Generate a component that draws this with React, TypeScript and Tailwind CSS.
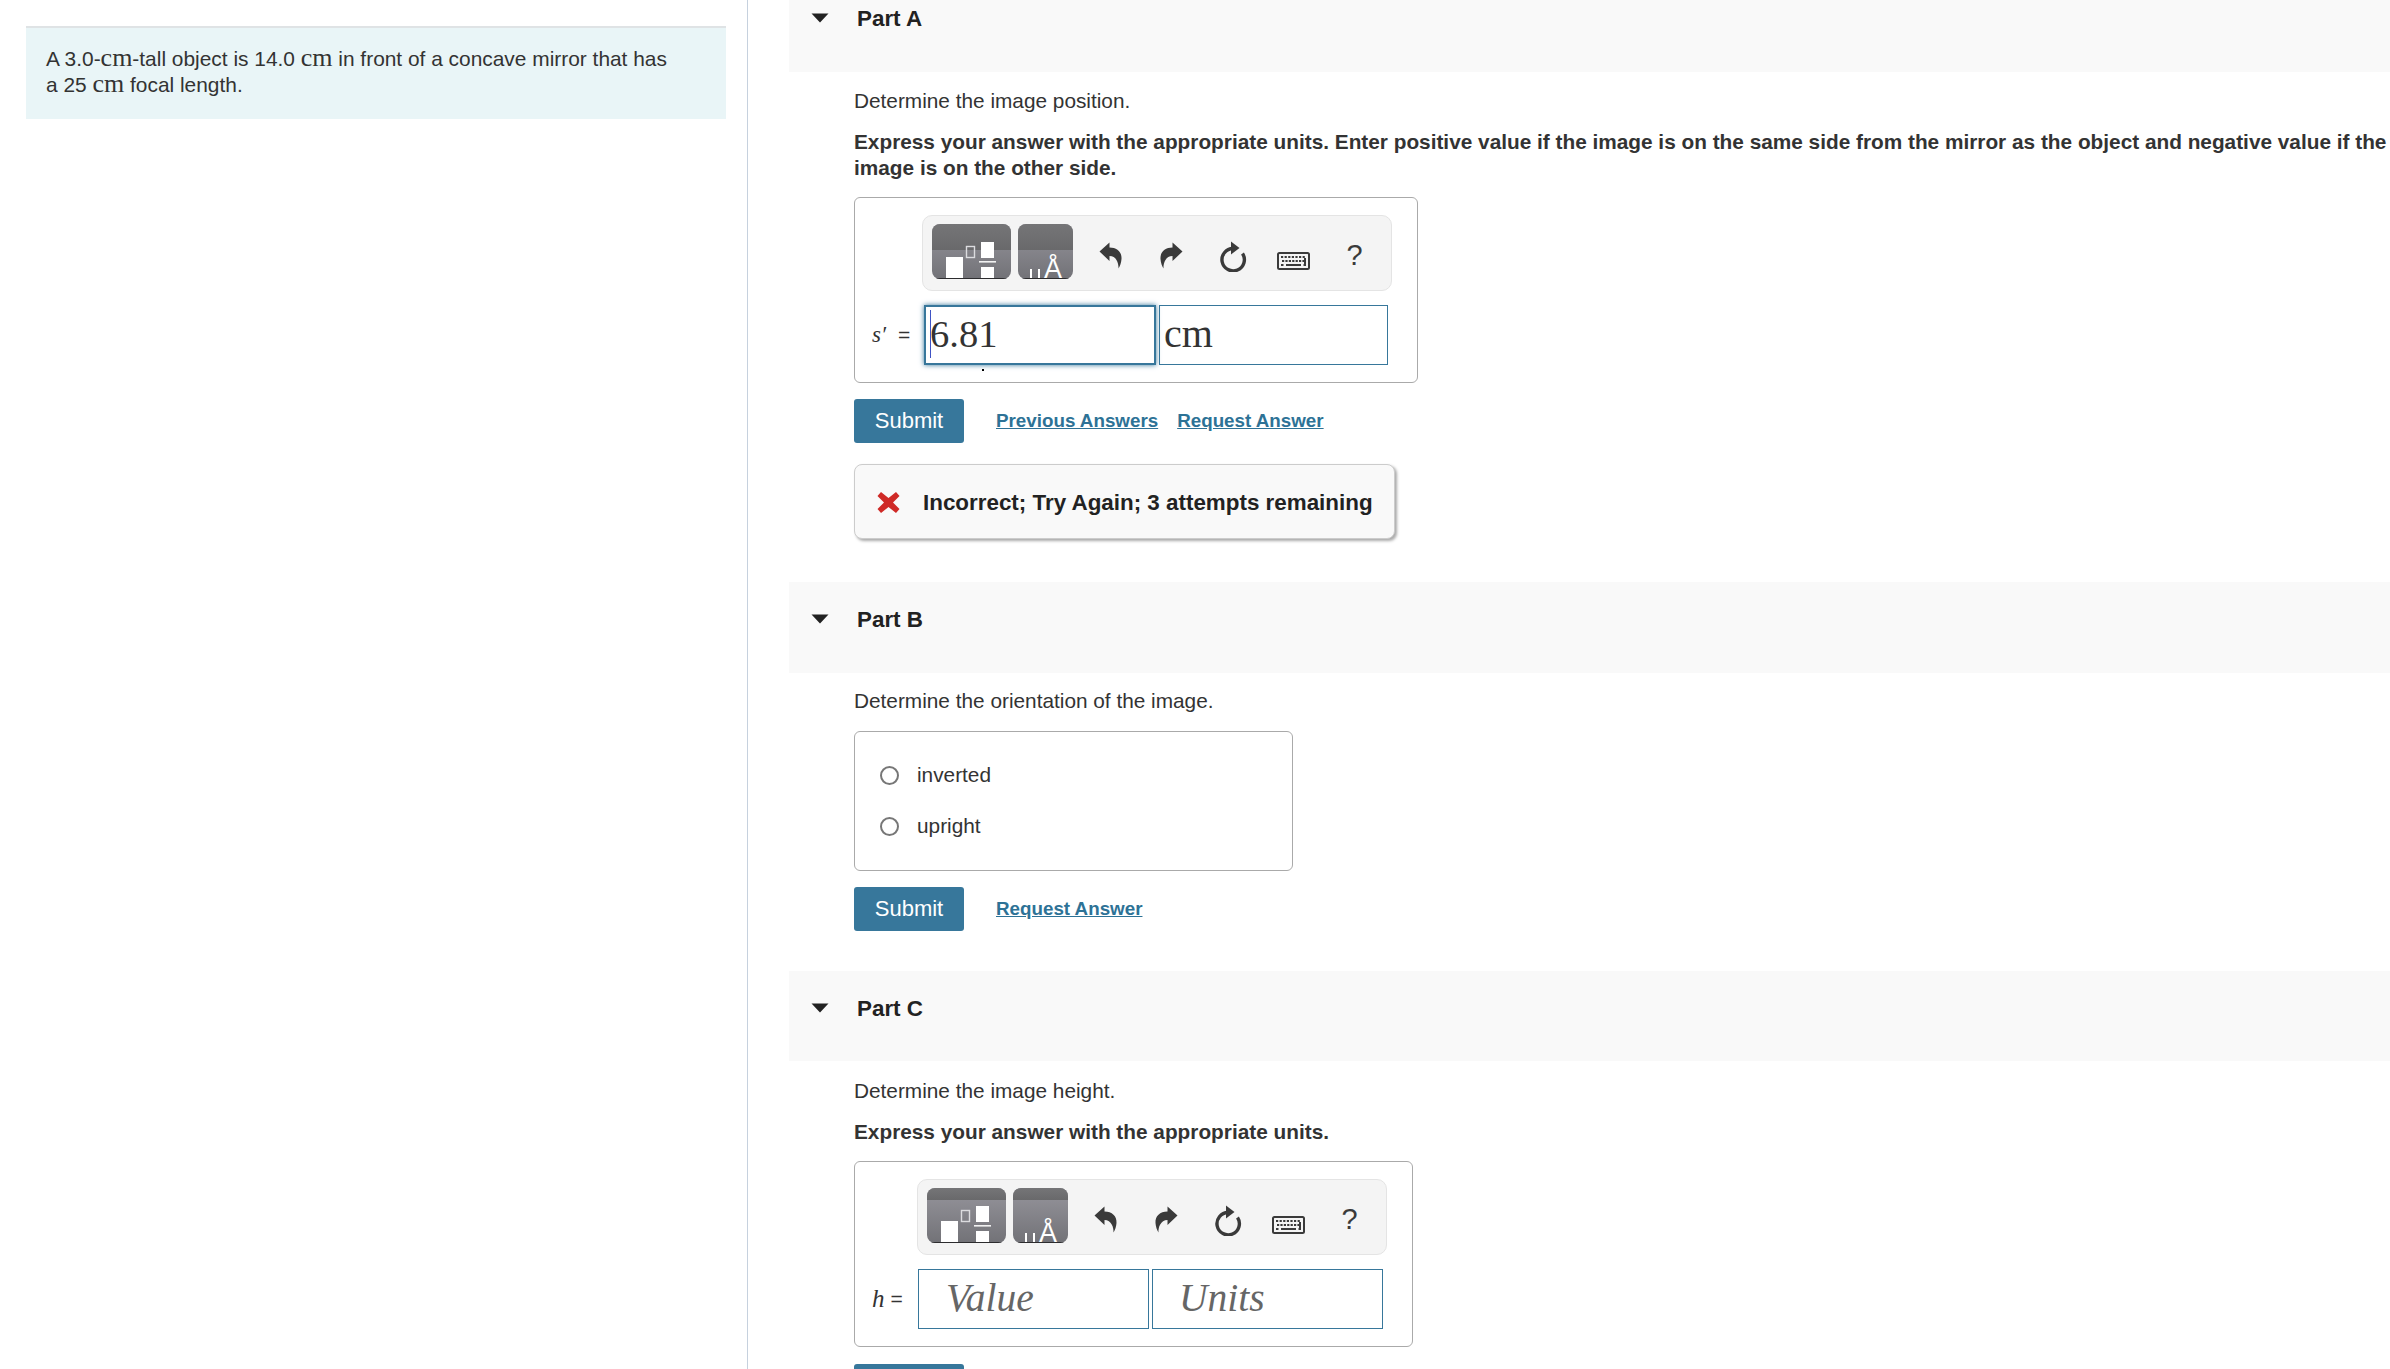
import React, { useId } from 'react';

const sans = "font-['Liberation_Sans',Arial,sans-serif]";
const serif = "font-['Liberation_Serif','Times_New_Roman',serif]";

function UndoIcon({ flip = false }: { flip?: boolean }) {
  return (
    <svg width="23" height="27" viewBox="0 0 23 27" className={flip ? '-scale-x-100 mt-[18px]' : 'mt-[18px]'}>
      <path d="M0.5 9.5 L10.5 0.5 V5.5 C18 5.5 23 10 22.5 17 C22.3 20.5 21 24 19.5 26.5 C19.8 21.5 17.5 14 10.5 14 V19 Z" fill="#3a3a3a" />
    </svg>
  );
}

function ReloadIcon() {
  return (
    <svg width="28" height="31" viewBox="0 0 28 31" className="mt-[17px]">
      <path d="M14 7.5 A11.2 11.2 0 1 0 23.5 12.5" fill="none" stroke="#3a3a3a" strokeWidth="3.4" />
      <path d="M12 0.5 L20.5 7 L12 13.5 Z" fill="#3a3a3a" />
    </svg>
  );
}

function KeyboardIcon() {
  const top = [0, 1, 2, 3, 4, 5, 6];
  return (
    <svg width="33" height="18" viewBox="0 0 33 18" className="mt-[28px]">
      <rect x="1" y="1" width="31" height="16" rx="1.5" fill="#f4f4f4" stroke="#3a3a3a" strokeWidth="2" />
      {top.map((i) => (
        <rect key={i} x={4 + i * 3.6} y="4" width="2.2" height="2" fill="#3a3a3a" />
      ))}
      {top.map((i) => (
        <rect key={i} x={5 + i * 3.4} y="8" width="2.2" height="2" fill="#3a3a3a" />
      ))}
      <rect x="4" y="12" width="2.5" height="2" fill="#3a3a3a" />
      <rect x="9" y="12" width="15" height="2" fill="#3a3a3a" />
      <rect x="26.5" y="12" width="2.5" height="2" fill="#3a3a3a" />
      <rect x="27" y="6" width="2" height="6" fill="#3a3a3a" />
    </svg>
  );
}

function TemplateButton({ band, wide }: { band: number; wide: boolean }) {
  const id = useId();
  const w = wide ? 79 : 55;
  return (
    <svg width={w} height="55" viewBox={`0 0 ${w} 55`} className="block">
      <defs>
        <linearGradient id={`${id}t`} x1="0" y1="0" x2="0" y2="1">
          <stop offset="0" stopColor="#757577" />
          <stop offset="1" stopColor="#69696b" />
        </linearGradient>
        <linearGradient id={`${id}b`} x1="0" y1="0" x2="0" y2="1">
          <stop offset="0" stopColor="#96959c" />
          <stop offset="1" stopColor="#727277" />
        </linearGradient>
        <clipPath id={`${id}c`}>
          <rect x="0" y="0" width={w} height="55" rx="8" />
        </clipPath>
      </defs>
      <g clipPath={`url(#${id}c)`}>
        <rect width={w} height="55" fill={`url(#${id}b)`} />
        <rect width={w} height={band} fill={`url(#${id}t)`} />
        {wide ? (
          <>
            <rect x="14" y="33" width="17" height="21" fill="#fff" />
            <rect x="34.5" y="22.5" width="8" height="11" fill="none" stroke="#dcdcdf" strokeWidth="1.4" />
            <rect x="49" y="18" width="13" height="16" fill="#fff" />
            <rect x="47" y="37" width="17" height="1.6" fill="#f2f2f2" />
            <rect x="49" y="43" width="13" height="11" fill="#fff" />
          </>
        ) : (
          <>
            <rect x="12" y="45" width="2" height="9" fill="#fff" />
            <rect x="20" y="45" width="2" height="9" fill="#fff" />
            <text x="35" y="54" textAnchor="middle" fill="#fff" fontSize="27" fontFamily="Liberation Sans, Arial, sans-serif">
              Å
            </text>
          </>
        )}
        <rect x="0" y="54" width={w} height="1" fill="#2c2c2e" />
      </g>
    </svg>
  );
}

function Toolbar({ band, className }: { band: number; className: string }) {
  return (
    <div className={`h-[76px] w-[470px] bg-[#f4f4f4] border border-[#e4e4e4] rounded-[10px] pl-[9px] pt-[8px] flex items-start ${className}`}>
      <TemplateButton band={band} wide />
      <div className="ml-[7px]">
        <TemplateButton band={band} wide={false} />
      </div>
      <div className="ml-[7px] flex items-start text-[#3a3a3a]">
        <div className="w-[61px] flex justify-center"><UndoIcon /></div>
        <div className="w-[61px] flex justify-center"><UndoIcon flip /></div>
        <div className="w-[61px] flex justify-center"><ReloadIcon /></div>
        <div className="w-[61px] flex justify-center"><KeyboardIcon /></div>
        <div className="w-[61px] flex justify-center text-[29px] leading-[34px] mt-[14px]">?</div>
      </div>
    </div>
  );
}

function PartHeader({ name, className }: { name: string; className: string }) {
  return (
    <div className={`bg-[#f9f9f9] flex items-start ${className}`}>
      <svg width="18" height="10" viewBox="0 0 18 10" className="ml-[22px] mt-[8px] shrink-0">
        <path d="M0.5 0.5 H17.5 L9 9.5 Z" fill="#222" />
      </svg>
      <div className="ml-[28px] mt-[1px] font-bold text-[22.4px] leading-[26px] text-[#222]">{name}</div>
    </div>
  );
}

function SubmitRow({ links }: { links: string[] }) {
  return (
    <div className="flex items-center">
      <button className="w-[110px] h-[44px] bg-[#37779b] rounded-[3px] text-white text-[22px]">Submit</button>
      <div className="ml-[32px] flex gap-[19px]">
        {links.map((l) => (
          <a key={l} className="text-[18.8px] font-bold text-[#2d7296] underline">
            {l}
          </a>
        ))}
      </div>
    </div>
  );
}

export default function App() {
  return (
    <div className={`h-[1369px] w-[2390px] overflow-hidden bg-white flex text-[#333] text-[20.8px] leading-[26px] ${sans}`}>
      <div className="w-[748px] shrink-0 h-full border-r border-[#c6d1de] pl-[26px] pt-[26px]">
        <div className="w-[700px] h-[93px] bg-[#e9f5f7] border-t-2 border-[#dfe3e5] pl-[20px] pt-[18px] pr-[30px] text-[20.9px]">
          A 3.0-<span className={`${serif} text-[26px] leading-[20px]`}>cm</span>-tall object is 14.0 <span className={`${serif} text-[26px] leading-[20px]`}>cm</span> in front of a concave mirror that has
          <br />a 25 <span className={`${serif} text-[26px] leading-[20px]`}>cm</span> focal length.
        </div>
      </div>

      <div className="flex-1 min-w-0 pl-[41px]">
        <PartHeader name="Part A" className="h-[72px] pt-[5px]" />
        <div className="pl-[65px]">
          <p className="mt-[16px]">Determine the image position.</p>
          <p className="mt-[15px] font-bold w-[1540px]">
            Express your answer with the appropriate units. Enter positive value if the image is on the same side from the mirror as the object and negative value if the image is on the other side.
          </p>

          <div className="relative mt-[16px] w-[564px] h-[186px] border border-[#aaa] rounded-[6px] pt-[17px]">
            <Toolbar band={26} className="ml-[67px]" />
            <div className="mt-[14px] flex items-center">
              <div className="w-[69px] pl-[17px] flex items-center whitespace-nowrap">
                <span className={`${serif} italic text-[23px]`}>s′</span>
                <span className="ml-[12px] text-[21px]">=</span>
              </div>
              <div className="relative w-[232px] h-[60px] border-2 border-[#37779b] shadow-[0_0_5px_#37779b] pl-[4px] text-[38.5px] leading-[54px] text-[#333]">
                <span className={serif}>6.81</span>
                <div className="absolute left-[4px] top-[3px] w-px h-[48px] bg-[#3f53c4]" />
              </div>
              <div className={`ml-[3px] w-[229px] h-[60px] border border-[#37779b] pl-[4px] text-[40px] leading-[56px] ${serif}`}>cm</div>
            </div>
            <div className="absolute left-[127px] top-[171px] w-[2px] h-[2px] bg-black" />
          </div>

          <div className="mt-[16px]">
            <SubmitRow links={['Previous Answers', 'Request Answer']} />
          </div>

          <div className="mt-[21px] w-[541px] h-[75px] bg-[#f9f9f9] border border-[#ccc] rounded-[8px] shadow-[2px_2px_3px_#aaa] flex items-center pl-[22px] pt-[2px]">
            <svg width="23" height="23" viewBox="0 0 23 23" className="shrink-0">
              <path d="M4 1 L11.5 7 L19 1 L22.5 5 L16 11.5 L22.5 18 L19 22 L11.5 16 L4 22 L0.5 18 L7 11.5 L0.5 5 Z" fill="#cf2a27" />
            </svg>
            <div className="ml-[23px] font-bold text-[22.4px] text-[#222] whitespace-nowrap">Incorrect; Try Again; 3 attempts remaining</div>
          </div>
        </div>

        <PartHeader name="Part B" className="mt-[43px] h-[91px] pt-[24px]" />
        <div className="pl-[65px]">
          <p className="mt-[15px]">Determine the orientation of the image.</p>
          <div className="mt-[17px] w-[439px] h-[140px] border border-[#aaa] rounded-[6px] pl-[25px] pt-[30px]">
            {['inverted', 'upright'].map((o) => (
              <div key={o} className="flex items-center h-[26px] mb-[25px]">
                <div className="w-[19px] h-[19px] rounded-full border-2 border-[#777] bg-white" />
                <div className="ml-[18px]">{o}</div>
              </div>
            ))}
          </div>
          <div className="mt-[16px]">
            <SubmitRow links={['Request Answer']} />
          </div>
        </div>

        <PartHeader name="Part C" className="mt-[40px] h-[90px] pt-[24px]" />
        <div className="pl-[65px]">
          <p className="mt-[17px]">Determine the image height.</p>
          <p className="mt-[15px] font-bold">Express your answer with the appropriate units.</p>

          <div className="mt-[16px] w-[559px] h-[186px] border border-[#aaa] rounded-[6px] pt-[17px]">
            <Toolbar band={12} className="ml-[62px]" />
            <div className="mt-[14px] flex items-center">
              <div className="w-[63px] pl-[17px] flex items-center whitespace-nowrap">
                <span className={`${serif} italic text-[25px]`}>h</span>
                <span className="ml-[6px] text-[21px]">=</span>
              </div>
              <div className={`w-[231px] h-[60px] border border-[#37779b] pl-[27px] text-[39.5px] leading-[56px] italic text-[#666] ${serif}`}>Value</div>
              <div className={`ml-[3px] w-[231px] h-[60px] border border-[#37779b] pl-[26px] text-[39.5px] leading-[56px] italic text-[#666] ${serif}`}>Units</div>
            </div>
          </div>

          <div className="mt-[17px]">
            <SubmitRow links={[]} />
          </div>
        </div>
      </div>
    </div>
  );
}
